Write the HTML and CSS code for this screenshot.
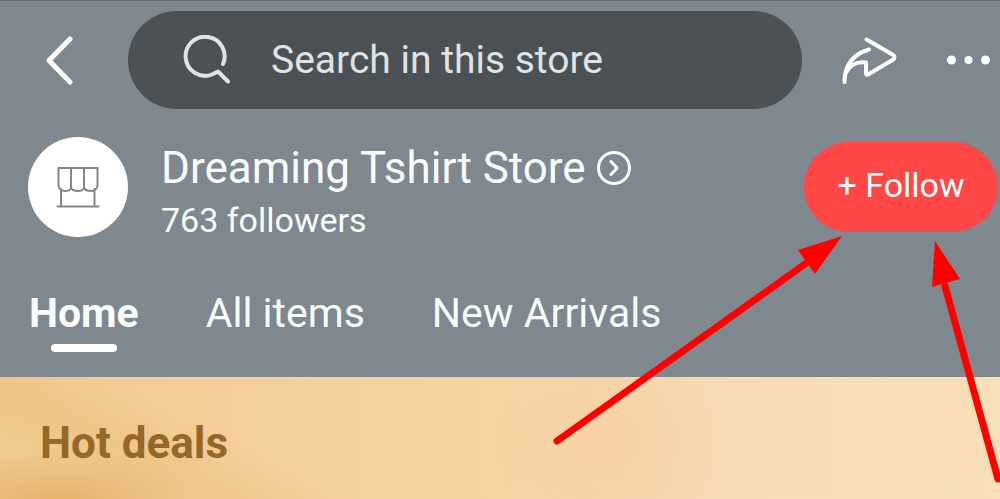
FILE: index.html
```html
<!DOCTYPE html>
<html lang="en">
<head>
    <meta charset="UTF-8">
    <meta name="viewport" content="width=device-width, initial-scale=1.0">
    <title>Dreaming Tshirt Store</title>
    <link rel="stylesheet" href="styles.css">
</head>
<body>
    <header class="store-header">
        <div class="top-bar">
            <button class="icon-btn back-btn" type="button" aria-label="Back">
                <svg width="28" height="50" viewBox="0 0 28 50"><path d="M25 4 L4 25.500 L25 47"/></svg>
            </button>
            <label class="search-box">
                <svg width="50" height="50" viewBox="0 0 50 50"><path d="M42 29 A19.500 19.500 0 1 0 31 39.500 Q34 38 37 36.500 L47 46.500"/></svg>
                <input type="search" placeholder="Search in this store" aria-label="Search in this store">
            </label>
            <button class="icon-btn share-btn" type="button" aria-label="Share">
                <svg width="56" height="50" viewBox="0 0 56 50"><path d="M24.500 4.500 L50.500 19.500 Q54.500 22 50.500 25 L26 39.500 Q24 40.500 24 38 L24 27.500 Q10 26 4.500 37"/><path d="M27 14.500 Q2.500 22 2.500 47"/></svg>
            </button>
            <button class="icon-btn more-btn" type="button" aria-label="More">
                <svg width="46" height="10" viewBox="0 0 46 10"><circle cx="5.500" cy="5" r="4.500"/><circle cx="22.500" cy="5" r="4"/><circle cx="39.500" cy="5" r="4.500"/></svg>
            </button>
        </div>

        <div class="store-info">
            <div class="avatar">
                <svg width="44" height="44" viewBox="0 0 44 44"><path d="M2.500 21 V3 H41.500 V21 M15 3 V23 M28 3 V23 M2.500 21 Q4 26 9 26 Q14 26 15 23 Q16.500 26 22 26 Q27 26 28 23 Q29.500 26 35 26 Q40 26 41.500 21 M5 24 V41 M38.500 24 V41 M1.500 41.500 H42.500"/></svg>
            </div>
            <div class="store-text">
                <h1><a href="#">Dreaming Tshirt Store
                    <svg width="36" height="36" viewBox="0 0 36 36"><circle cx="18" cy="18" r="15.500"/><path d="M15 11.500 L21 18 L15 24.500"/></svg>
                </a></h1>
                <p>763 followers</p>
            </div>
            <button class="follow-btn" type="button">+ Follow</button>
        </div>

        <nav class="tabs">
            <a href="#" class="active">Home</a>
            <a href="#">All items</a>
            <a href="#">New Arrivals</a>
        </nav>
    </header>

    <main class="deals">
        <h2>Hot deals</h2>
    </main>

    <!-- arrows pointing at the follow button -->
    <svg class="arrows" width="450" height="260" viewBox="0 0 450 260" aria-hidden="true">
        <path class="shaft" d="M7 211 L262 29 M448 249 L395 56"/>
        <path class="head" d="M292 6 L248 20 L265 44 Z M385 11 L382 57 L410 49 Z"/>
    </svg>
</body>
</html>
```
FILE: styles.css
```css
* {
    box-sizing: border-box;
}
body {
    margin: 0;
    position: relative;
    min-height: 100vh;
    display: flex;
    flex-direction: column;
    overflow: hidden;
    font-family: Roboto, sans-serif;
    background-color: #f6d9b0;
}
h1, h2, p {
    margin: 0;
    font-weight: 400;
}
a {
    color: inherit;
    text-decoration: none;
}
button, input {
    font: inherit;
    color: inherit;
    border: none;
    padding: 0;
    background: none;
}
button {
    cursor: pointer;
}
svg {
    display: block;
    flex: none;
    fill: none;
    stroke: #fff;
    stroke-width: 5px;
    stroke-linecap: round;
    stroke-linejoin: round;
}
.store-header {
    color: #f8fdff;
    background-color: #7e888e;
    border-top: 1px solid #626c72;
}
.top-bar {
    display: flex;
    align-items: center;
    padding: 10px 8px 0 45px;
}
.search-box {
    flex: 1;
    min-width: 0;
    display: flex;
    align-items: center;
    gap: 40px;
    height: 98px;
    margin: 0 40px 0 55px;
    padding: 0 53px;
    border-radius: 49px;
    background-color: #4b5154;
    color: #dfe3e5;
}
.search-box svg {
    stroke: #dfe3e5;
    stroke-width: 4px;
}
.search-box input {
    flex: 1;
    min-width: 0;
    outline: none;
    font-size: 39px;
}
.search-box input::placeholder {
    color: inherit;
    opacity: 1;
}
.share-btn {
    margin-right: 48px;
}
.share-btn svg {
    stroke-width: 4px;
}
.more-btn svg {
    fill: #fff;
    stroke: none;
}
.store-info {
    display: flex;
    align-items: flex-start;
    padding: 28px 2px 0 28px;
}
.avatar {
    display: flex;
    align-items: center;
    justify-content: center;
    width: 100px;
    height: 100px;
    border-radius: 50%;
    background-color: #fff;
}
.avatar svg {
    stroke: #858585;
    stroke-width: 2px;
}
.store-text {
    flex: 1;
    margin-left: 33px;
    padding-top: 5px;
}
.store-text h1 {
    font-size: 44px;
    line-height: 52px;
}
.store-text h1 a {
    display: flex;
    align-items: center;
    gap: 10px;
}
.store-text h1 svg {
    stroke-width: 3px;
}
.store-text p {
    font-size: 34px;
    line-height: 52px;
}
.follow-btn {
    width: 194px;
    height: 90px;
    margin-top: 5px;
    padding-bottom: 5px;
    border-radius: 45px;
    background-color: #ff4747;
    font-size: 34px;
}
.tabs {
    display: flex;
    gap: 67px;
    padding: 41px 29px 25px;
    font-size: 41px;
    line-height: 52px;
}
.tabs a {
    display: flex;
    flex-direction: column;
    align-items: center;
}
.tabs a::after {
    content: "";
    width: 66px;
    height: 8px;
    margin-top: 5px;
    border-radius: 4px;
}
.tabs .active {
    font-weight: 700;
}
.tabs .active::after {
    background-color: #fff;
}
.deals {
    flex: 1;
    padding: 40px;
    background:
        radial-gradient(ellipse 150px 60px at 6% 100%, rgba(222, 168, 88, 0.8), transparent),
        linear-gradient(25deg, transparent 10%, rgba(230, 184, 112, 0.35) 20%, transparent 30%),
        radial-gradient(ellipse 120px 110px at 61% 50%, rgba(248, 204, 156, 0.6), transparent),
        linear-gradient(90deg, #f0ca90 0%, #f5d09f 28%, #f6d4a4 50%, #f6dab3 70%, #f7dfb8 100%);
}
.deals h2 {
    color: #966728;
    font-size: 44px;
    font-weight: 700;
    line-height: 52px;
}
.arrows {
    position: absolute;
    top: 230px;
    right: 0;
    pointer-events: none;
}
.arrows .shaft {
    stroke: #f00;
    stroke-width: 7px;
}
.arrows .head {
    fill: #f00;
    stroke: none;
}
```
